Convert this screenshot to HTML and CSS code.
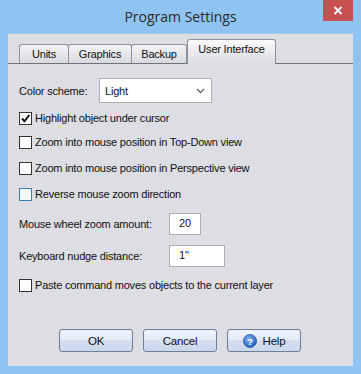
FILE: index.html
```html
<!DOCTYPE html>
<html>
<head>
<meta charset="utf-8">
<link rel="stylesheet" href="styles.css">
</head>
<body>
<div class="window">
  <div class="titlebar">
    <span class="title">Program Settings</span>
    <div class="close"><svg width="10" height="9" viewBox="0 0 10 9"><path d="M1.5 1 L8.5 8 M8.5 1 L1.5 8" stroke="#fff" stroke-width="1.8"/></svg></div>
  </div>
  <div class="client">
    <div class="tabs">
      <div class="tab">Units</div>
      <div class="tab">Graphics</div>
      <div class="tab">Backup</div>
      <div class="tab active">User Interface</div>
    </div>
    <div class="panel">
      <div class="row first">
        <span class="lbl scheme">Color scheme:</span>
        <div class="select"><span>Light</span><svg width="9" height="6" viewBox="0 0 9 6"><path d="M1 1 L4.5 4.5 L8 1" fill="none" stroke="#666" stroke-width="1.4"/></svg></div>
      </div>
      <div class="check c1"><span class="box"><svg width="11" height="11" viewBox="0 0 11 11"><path d="M2 5.5 L4.5 8.3 L9.3 2.2" fill="none" stroke="#111" stroke-width="2"/></svg></span><span>Highlight object under cursor</span></div>
      <div class="check c2"><span class="box"></span><span>Zoom into mouse position in Top-Down view</span></div>
      <div class="check c3"><span class="box"></span><span>Zoom into mouse position in Perspective view</span></div>
      <div class="check c4"><span class="box hover"></span><span>Reverse mouse zoom direction</span></div>
      <div class="row field f1"><span class="lbl wide">Mouse wheel zoom amount:</span><div class="input short">20</div></div>
      <div class="row field f2"><span class="lbl wide">Keyboard nudge distance:</span><div class="input long">1"</div></div>
      <div class="check c5"><span class="box"></span><span>Paste command moves objects to the current layer</span></div>
    </div>
    <div class="buttons">
      <div class="btn">OK</div>
      <div class="btn">Cancel</div>
      <div class="btn"><svg width="14" height="14" viewBox="0 0 15 15"><defs><radialGradient id="g" cx="0.4" cy="0.35" r="0.7"><stop offset="0" stop-color="#7fb2ee"/><stop offset="1" stop-color="#1f5fbf"/></radialGradient></defs><circle cx="7.5" cy="7.5" r="7" fill="url(#g)" stroke="#1b4f9e" stroke-width="0.8"/><text x="7.5" y="11.3" text-anchor="middle" font-family="Liberation Sans, sans-serif" font-weight="bold" font-size="10.5" fill="#fff">?</text></svg><span>Help</span></div>
    </div>
  </div>
</div>
</body>
</html>
```
FILE: styles.css
```css
* { box-sizing: border-box; }
html, body { margin: 0; padding: 0; }
body {
  width: 361px;
  height: 374px;
  overflow: hidden;
  background: #8ec3f2;
  font-family: "Liberation Sans", Arial, sans-serif;
  font-size: 11px;
  letter-spacing: -0.2px;
  color: #111;
}
.window {
  width: 361px;
  height: 374px;
  background: #8ec3f2;
  display: flex;
  flex-direction: column;
}
.titlebar {
  position: relative;
  height: 33px;
  display: flex;
  justify-content: center;
  align-items: center;
  padding-bottom: 1px;
}
.title {
  font-family: "Open Sans", "Noto Sans", sans-serif;
  font-size: 14px;
  letter-spacing: 0;
  color: #2b2b2b;
}
.close {
  position: absolute;
  top: 0;
  right: 8px;
  width: 30px;
  height: 21px;
  background: #c75050;
  display: flex;
  align-items: center;
  justify-content: center;
}
.client {
  margin: 0 8px 8px 8px;
  height: 333px;
  background: #dcdee3;
  border-top: 1px solid #a9c7e3;
  display: flex;
  flex-direction: column;
}
.tabs {
  display: flex;
  align-items: flex-end;
  padding-left: 11px;
  margin-top: 5px;
  height: 24px;
}
.tab {
  height: 19px;
  padding: 3px 0 0 0;
  text-align: center;
  border: 1px solid #8e9199;
  border-bottom: none;
  border-radius: 3px 3px 0 0;
  background: linear-gradient(#f3f3f5, #d9dadf);
  margin-right: -1px;
}
.tab:nth-child(1) { width: 50px; }
.tab:nth-child(2) { width: 64px; }
.tab:nth-child(3) { width: 56px; }
.tab.active {
  width: 89px;
  height: 25px;
  margin-bottom: -1px;
  padding-top: 3px;
  background: linear-gradient(#fbfbfc, #e6e7ea 60%, #dcdee3);
  position: relative;
  z-index: 1;
  margin-left: 1px;
}
.panel {
  position: relative;
  border-top: 1px solid #70737a;
  padding: 14px 0 0 11px;
  display: flex;
  flex-direction: column;
  height: 260px;
}
.row { display: flex; align-items: center; }
.first { height: 25px; }
.lbl.scheme { width: 80px; }
.select {
  width: 113px;
  height: 25px;
  background: #fff;
  border: 1px solid #abadb3;
  display: flex;
  align-items: center;
  justify-content: space-between;
  padding: 0 6px 0 5px;
}
.check {
  display: flex;
  align-items: center;
  height: 16px;
}
.box {
  width: 13px;
  height: 13px;
  border: 1px solid #333;
  background: #fff;
  margin-right: 3px;
  display: flex;
  align-items: center;
  justify-content: center;
  flex: none;
}
.box.hover { border-color: #3c7fb1; background: #f3f9ff; }
.c1 { margin-top: 7px; }
.c2 { margin-top: 8px; }
.c3 { margin-top: 10px; }
.c4 { margin-top: 10px; }
.f1 { margin-top: 11px; }
.f2 { margin-top: 10px; }
.c5 { margin-top: 10px; }
.lbl.wide { width: 150px; }
.input {
  height: 22px;
  background: #fff;
  border: 1px solid #abadb3;
  padding: 3px 0 0 9px;
}
.input.short { width: 32px; }
.input.long { width: 56px; }
.buttons {
  display: flex;
  gap: 10px;
  padding-left: 51px;
  margin-top: 6px;
}
.btn {
  width: 74px;
  height: 23px;
  border: 1px solid #6d7f99;
  border-radius: 3px;
  background: linear-gradient(#eef3fa 0%, #e3ebf6 45%, #d3deee 50%, #cbd8ea 100%);
  display: flex;
  align-items: center;
  justify-content: center;
  gap: 6px;
  font-size: 11.5px;
}
```
